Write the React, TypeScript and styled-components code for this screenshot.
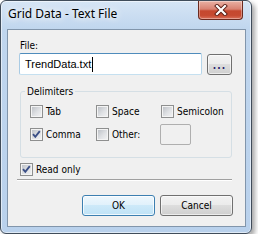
import React from 'react';
import styled, { createGlobalStyle } from 'styled-components';

const GlobalStyle = createGlobalStyle`
  html, body {
    margin: 0;
    padding: 0;
    background: #fff;
  }
  body {
    font-family: 'DejaVu Sans Condensed', 'Liberation Sans', Arial, sans-serif;
    font-size: 10px;
    color: #000;
  }
`;

const Window = styled.div`
  box-sizing: border-box;
  width: 252px;
  height: 234px;
  border: 1px solid #404c5a;
  border-radius: 6px;
  padding: 0 5px 6px 6px;
  display: flex;
  flex-direction: column;
  background: linear-gradient(180deg, #d6e5f5 0px, #c0d6ee 28px, #b9d1ec 100%);
  box-shadow: inset 0 0 0 1px rgba(255, 255, 255, 0.55),
    3px 3px 5px rgba(0, 0, 0, 0.35);
`;

const TitleBar = styled.div`
  height: 28px;
  display: flex;
  justify-content: space-between;
  align-items: flex-start;
`;

const Title = styled.div`
  padding: 5px 0 0 1px;
  font-family: 'Noto Sans', 'Open Sans', sans-serif;
  font-size: 12px;
  line-height: 16px;
  text-shadow: 0 0 6px #fff, 0 0 10px #fff;
`;

const CloseButton = styled.div`
  box-sizing: border-box;
  width: 45px;
  height: 19px;
  margin-right: 3px;
  border: 1px solid #6b2a1f;
  border-top: none;
  border-radius: 0 0 4px 4px;
  background: linear-gradient(180deg, #eab1a4 0%, #d98272 45%, #c5482f 55%, #c64a31 80%, #d9705a 100%);
  box-shadow: inset 0 0 0 1px rgba(255, 255, 255, 0.35);
  display: flex;
  align-items: center;
  justify-content: center;
`;

const Client = styled.div`
  flex: 1;
  border: 1px solid #8195ab;
  background: #f0f0f0;
  padding: 0 13px 0 11px;
  display: flex;
  flex-direction: column;
`;

const FieldLabel = styled.div`
  margin-top: 9px;
  padding-left: 1px;
  line-height: 13px;
`;

const FileRow = styled.div`
  margin-top: 1px;
  display: flex;
  align-items: center;
  gap: 5px;
`;

const TextBox = styled.div`
  box-sizing: border-box;
  width: 183px;
  height: 22px;
  border: 1px solid;
  border-color: #4f8cbc #b5d5ea #c5e0f0 #a9cbe4;
  border-radius: 2px;
  background: #fff;
  padding: 0 0 0 5px;
  display: flex;
  align-items: center;
  font-family: 'Liberation Sans', Arial, sans-serif;
  font-size: 11px;
  line-height: 13px;
`;

const Caret = styled.span`
  display: inline-block;
  width: 1px;
  height: 15px;
  margin-left: 1px;
  background: #000;
`;

const PushButton = styled.div<{ $primary?: boolean; $width: number }>`
  box-sizing: border-box;
  width: ${(p) => p.$width}px;
  height: 21px;
  border: 1px solid ${(p) => (p.$primary ? '#3c7fb1' : '#707070')};
  border-radius: 3px;
  background: ${(p) =>
    p.$primary
      ? 'linear-gradient(180deg, #eef7fd 0%, #e0f1fb 49%, #cde9f9 50%, #bfe2f6 100%)'
      : 'linear-gradient(180deg, #f2f2f2 0%, #ebebeb 49%, #dddddd 50%, #cfcfcf 100%)'};
  box-shadow: inset 0 0 0 1px ${(p) => (p.$primary ? 'rgba(255,255,255,0.75)' : 'rgba(255,255,255,0.6)')};
  display: flex;
  align-items: center;
  justify-content: center;
  line-height: 13px;
`;

const Dots = styled.span`
  color: #28206a;
  font-weight: bold;
  letter-spacing: 1px;
  margin-top: 2px;
`;

const GroupBox = styled.fieldset`
  margin: 10px 0 0 1px;
  min-width: 0;
  padding: 3px 0 12px 9px;
  border: 1px solid #d5dfe5;
  border-radius: 3px;
`;

const GroupLegend = styled.legend`
  margin-left: -5px;
  padding: 0 2px;
  line-height: 13px;
`;

const OptionGrid = styled.div`
  display: grid;
  grid-template-columns: 66px 65px 1fr;
  grid-auto-rows: 21px;
  row-gap: 2px;
`;

const CheckRow = styled.label`
  display: flex;
  align-items: center;
  gap: 3px;
  line-height: 13px;
`;

const Box = styled.span`
  box-sizing: border-box;
  width: 13px;
  height: 13px;
  border: 1px solid #8e8f8f;
  background: linear-gradient(135deg, #b9bdc3 0%, #dfe1e4 55%, #f4f4f5 100%);
  box-shadow: inset 0 0 0 1px #f4f4f4;
  display: flex;
  align-items: center;
  justify-content: center;
`;

const SmallBox = styled.div`
  box-sizing: border-box;
  width: 31px;
  height: 21px;
  margin-left: -1px;
  border: 1px solid #afafaf;
  border-radius: 2px;
  background: #f0f0f0;
`;

const ReadOnlyRow = styled(CheckRow)`
  margin-top: 5px;
  padding-left: 1px;
`;

const Separator = styled.div`
  margin: 3px 0 0 -2px;
  border-top: 1px solid #a0a0a0;
  border-bottom: 1px solid #fff;
`;

const ButtonRow = styled.div`
  margin: 14px -1px 0 0;
  display: flex;
  justify-content: flex-end;
  gap: 5px;
`;

const Check = () => (
  <svg width="11" height="11" viewBox="0 0 11 11">
    <path d="M2 5.2 L4.3 7.8 L8.8 2.2" fill="none" stroke="#3b4f86" strokeWidth="1.9" />
  </svg>
);

const CheckBox: React.FC<{ label: string; checked?: boolean }> = ({ label, checked }) => (
  <CheckRow>
    <Box>{checked && <Check />}</Box>
    {label}
  </CheckRow>
);

export default function App() {
  return (
    <>
      <GlobalStyle />
      <Window>
        <TitleBar>
          <Title>Grid Data - Text File</Title>
          <CloseButton>
            <svg width="14" height="12" viewBox="0 0 14 12">
              <path d="M3 2 L11 10 M11 2 L3 10" stroke="#5a1d14" strokeWidth="4" strokeLinecap="square" />
              <path d="M3 2 L11 10 M11 2 L3 10" stroke="#fff" strokeWidth="2.2" strokeLinecap="square" />
            </svg>
          </CloseButton>
        </TitleBar>
        <Client>
          <FieldLabel>File:</FieldLabel>
          <FileRow>
            <TextBox>
              TrendData.txt
              <Caret />
            </TextBox>
            <PushButton $width={25}>
              <Dots>...</Dots>
            </PushButton>
          </FileRow>
          <GroupBox>
            <GroupLegend>Delimiters</GroupLegend>
            <OptionGrid>
              <CheckBox label="Tab" />
              <CheckBox label="Space" />
              <CheckBox label="Semicolon" />
              <CheckBox label="Comma" checked />
              <CheckBox label="Other:" />
              <SmallBox />
            </OptionGrid>
          </GroupBox>
          <ReadOnlyRow>
            <Box>
              <Check />
            </Box>
            Read only
          </ReadOnlyRow>
          <Separator />
          <ButtonRow>
            <PushButton $primary $width={73}>OK</PushButton>
            <PushButton $width={73}>Cancel</PushButton>
          </ButtonRow>
        </Client>
      </Window>
    </>
  );
}
